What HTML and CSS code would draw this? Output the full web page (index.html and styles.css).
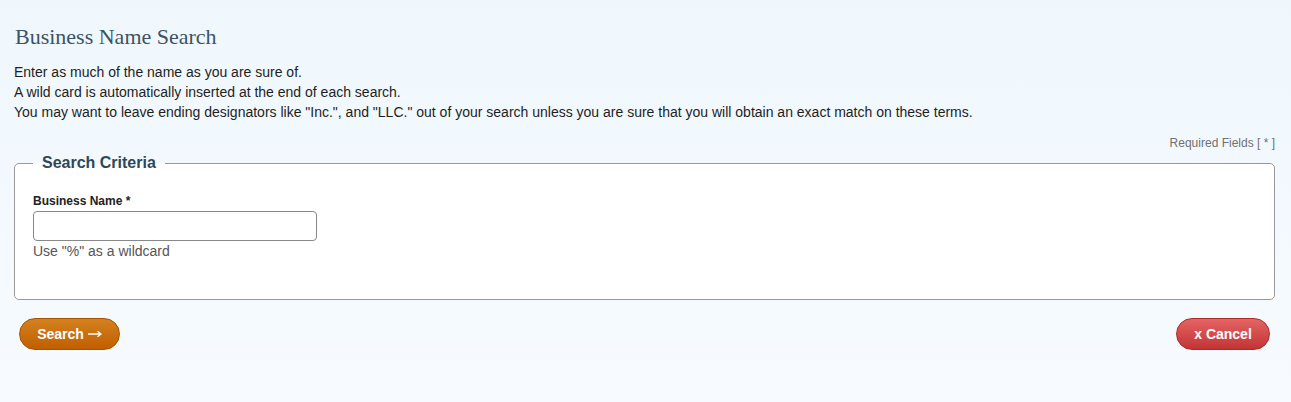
FILE: index.html
```html
<!DOCTYPE html>
<html>
<head>
<meta charset="utf-8">
<link rel="stylesheet" href="styles.css">
</head>
<body>
<div class="page">
  <h1 class="title">Business Name Search</h1>
  <div class="intro">
    <p>Enter as much of the name as you are sure of.</p>
    <p>A wild card is automatically inserted at the end of each search.</p>
    <p>You may want to leave ending designators like "Inc.", and "LLC." out of your search unless you are sure that you will obtain an exact match on these terms.</p>
  </div>
  <div class="required">Required Fields [ * ]</div>
  <fieldset class="criteria">
    <legend>Search Criteria</legend>
    <label class="field-label" for="bn">Business Name *</label>
    <input class="field-input" id="bn" type="text">
    <div class="hint">Use "%" as a wildcard</div>
  </fieldset>
  <div class="actions">
    <button class="btn btn-search">Search <svg class="arrow" width="14" height="8" viewBox="0 0 14 8"><path d="M0 4H12.5M9.5 1.2L13 4L9.5 6.8" fill="none" stroke="#fff" stroke-width="1.4"/></svg></button>
    <button class="btn btn-cancel">x Cancel</button>
  </div>
</div>
</body>
</html>
```
FILE: styles.css
```css
html, body {
  margin: 0;
  padding: 0;
  height: 100%;
}
body {
  background: linear-gradient(to bottom, #eff7fd 0%, #f7fbff 100%);
  font-family: "Liberation Sans", Arial, sans-serif;
  color: #222;
}
.page {
  padding: 24px 16px 0 14px;
}
.title {
  font-family: "Liberation Serif", Georgia, serif;
  font-weight: normal;
  font-size: 22px;
  color: #3c5364;
  margin: 0 0 0 1px;
  line-height: 26px;
}
.intro {
  margin-top: 12px;
  font-size: 14px;
  line-height: 20px;
  color: #1e1e1e;
}
.intro p {
  margin: 0;
}
.required {
  text-align: right;
  font-size: 12px;
  color: #707070;
  margin-top: 13px;
  line-height: 16px;
}
.criteria {
  margin: 3px 0 0 0;
  border: 1px solid #999;
  border-radius: 5px;
  background: #fff;
  padding: 20px 18px 38px 18px;
}
.criteria legend {
  font-size: 16px;
  font-weight: bold;
  color: #2f4858;
  padding: 0 9px;
  margin-left: 0;
}
.field-label {
  display: block;
  font-size: 12px;
  font-weight: bold;
  color: #222;
  margin-top: 1px;
  line-height: 16px;
}
.field-input {
  display: block;
  width: 284px;
  height: 30px;
  box-sizing: border-box;
  border: 1px solid #888;
  border-radius: 4px;
  margin-top: 2px;
  background: #fff;
}
.hint {
  font-size: 14px;
  color: #555;
  line-height: 20px;
}
.actions {
  display: flex;
  justify-content: space-between;
  padding: 18px 5px 0 5px;
}
.btn {
  height: 32px;
  border-radius: 16px;
  color: #fff;
  font-family: "Liberation Sans", Arial, sans-serif;
  font-size: 14px;
  font-weight: bold;
  padding: 0;
  cursor: pointer;
}
.arrow {
  vertical-align: middle;
  margin-top: -2px;
}
.btn-search {
  width: 101px;
  background: linear-gradient(to bottom, #d3821f, #c15e00);
  border: 1px solid #a85300;
}
.btn-cancel {
  width: 94px;
  background: linear-gradient(to bottom, #e56464, #c23434);
  border: 1px solid #b02a2a;
}
```
